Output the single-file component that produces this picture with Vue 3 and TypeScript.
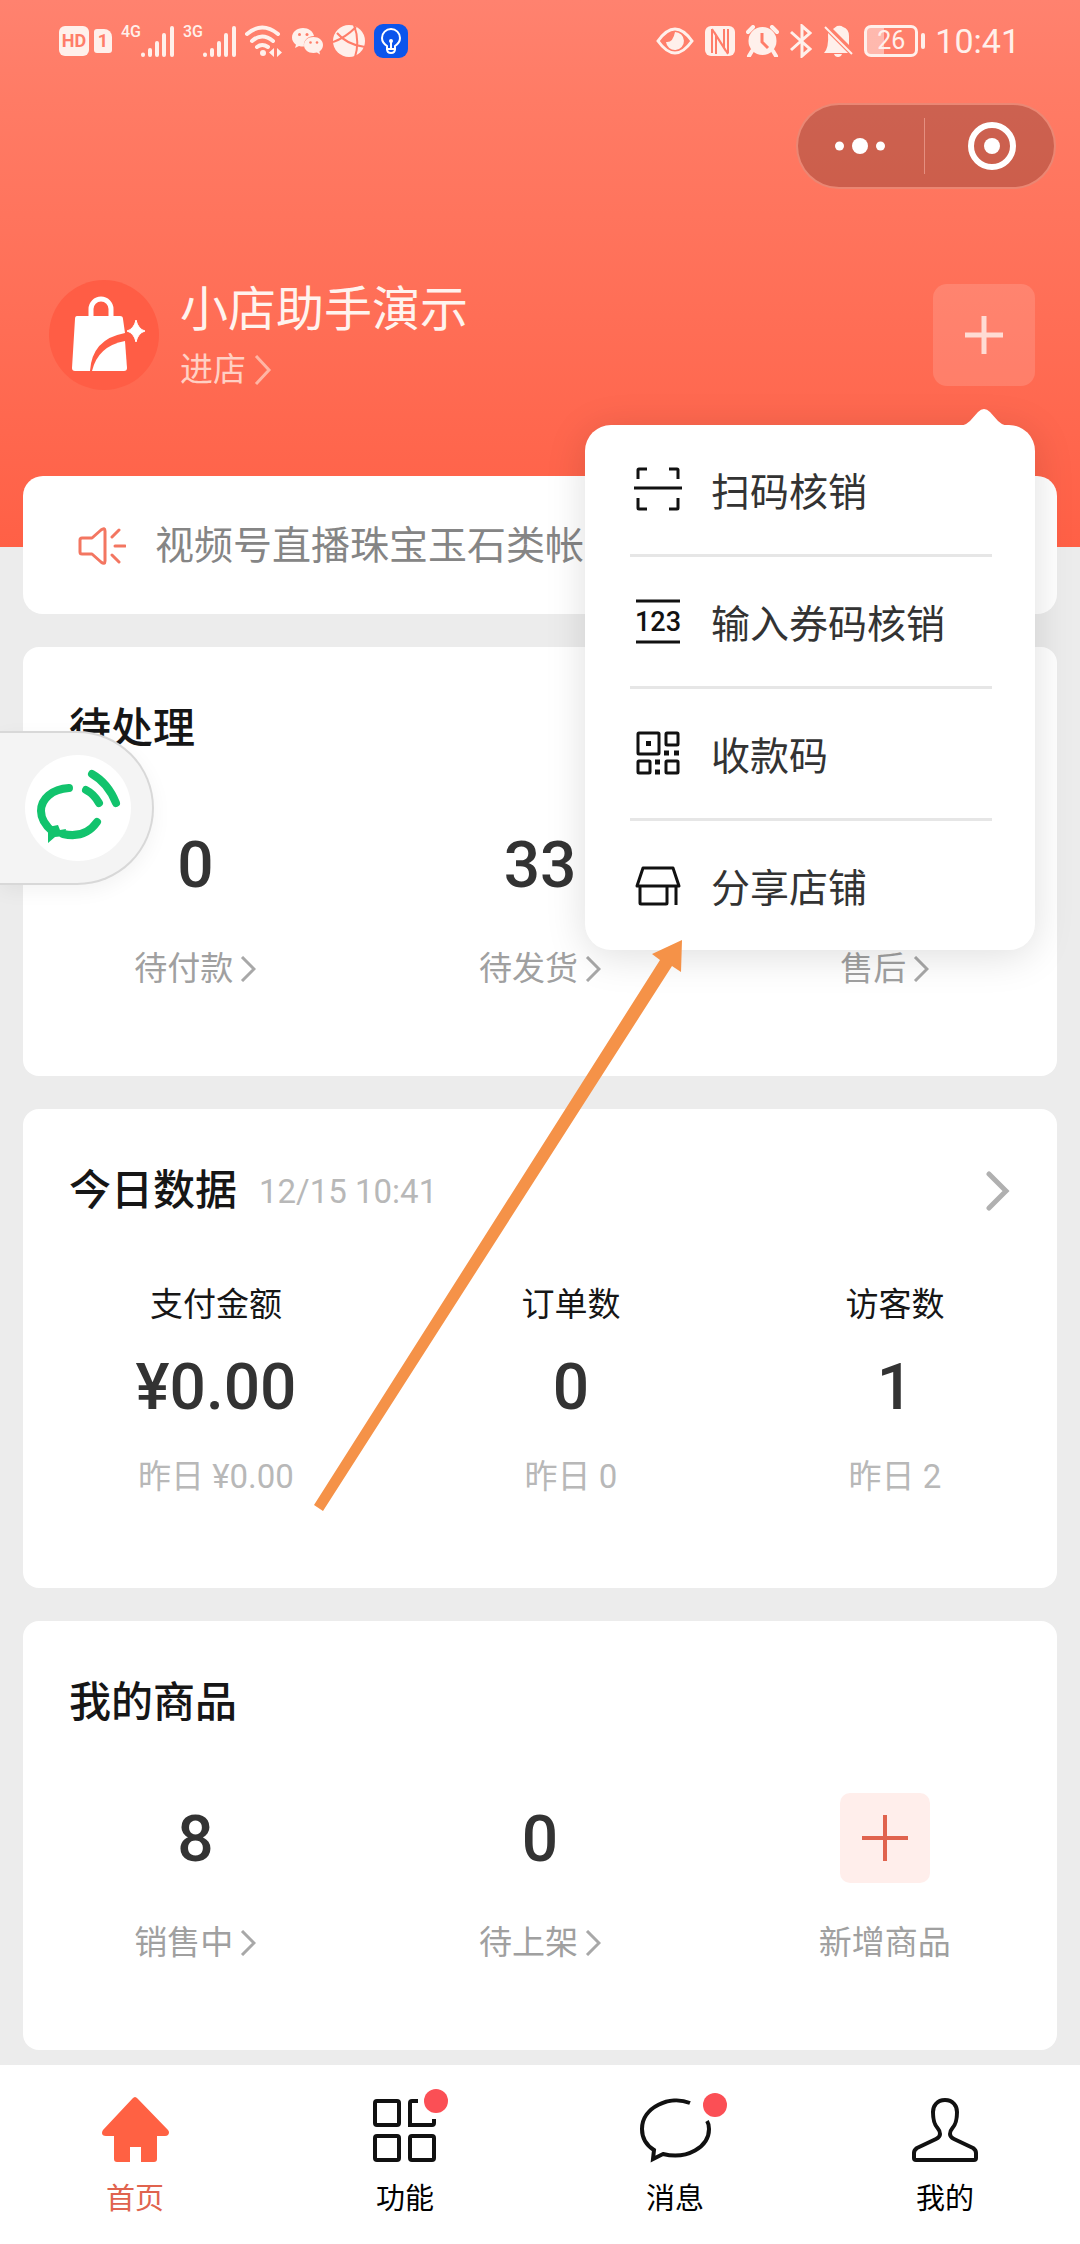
<script setup lang="ts">
import { ref } from 'vue'

interface Stat {
  label: string
  value: string
}

interface DayStat extends Stat {
  yesterday: string
}

type MenuIcon = 'scan' | 'digits' | 'qr' | 'shop'
type TabIcon = 'home' | 'grid' | 'chat' | 'me'

const menuOpen = ref(true)
const activeTab = ref<TabIcon>('home')

const menu: { icon: MenuIcon; label: string }[] = [
  { icon: 'scan', label: '扫码核销' },
  { icon: 'digits', label: '输入券码核销' },
  { icon: 'qr', label: '收款码' },
  { icon: 'shop', label: '分享店铺' },
]

const pending: Stat[] = [
  { label: '待付款', value: '0' },
  { label: '待发货', value: '33' },
  { label: '售后', value: '0' },
]

const today: DayStat[] = [
  { label: '支付金额', value: '¥0.00', yesterday: '昨日 ¥0.00' },
  { label: '订单数', value: '0', yesterday: '昨日 0' },
  { label: '访客数', value: '1', yesterday: '昨日 2' },
]

const goods: Stat[] = [
  { label: '销售中', value: '8' },
  { label: '待上架', value: '0' },
]

const tabs: { icon: TabIcon; label: string }[] = [
  { icon: 'home', label: '首页' },
  { icon: 'grid', label: '功能' },
  { icon: 'chat', label: '消息' },
  { icon: 'me', label: '我的' },
]
</script>

<template>
  <div class="page">
    <div class="status">
      <div class="status-group">
        <div class="badges">
          <span class="hd">HD</span>
          <span class="sim">1</span>
        </div>
        <div v-for="net in ['4G', '3G']" :key="net" class="signal">
          <span>{{ net }}</span>
          <svg width="33" height="32" viewBox="0 0 33 32" stroke="currentColor" stroke-width="4" stroke-linecap="round">
            <path d="M2 29.500v.5M9 25v5M16 18v12M23 10v20M31 3v27" />
          </svg>
        </div>
        <svg width="38" height="34" viewBox="0 0 38 34" fill="none" stroke="currentColor" stroke-width="4" stroke-linecap="round">
          <path d="M2 10Q17 -3 33 10M7 17Q17 8 28 17M12 23Q17 19 23 23" />
          <circle cx="18" cy="29" r="3" fill="currentColor" stroke="none" />
          <path d="M29 24v9l-5-4.500zM32 24v9l5-4.500z" fill="currentColor" stroke="none" />
        </svg>
        <svg width="32" height="30" viewBox="0 0 32 30" fill="currentColor">
          <path d="M11 2C5 2 0 6 0 11.500c0 3 1.600 5.500 4 7.200L3 22l4-2c1.300.4 2.700.5 4 .5h1c-1-6 4-10.500 10-10.500C21 5 16.500 2 11 2z" />
          <path d="M21.500 11C16 11 12 14.500 12 19s4 8 9.500 8c1.200 0 2.400-.2 3.500-.5l3 2-.6-3c2.200-1.500 3.600-3.800 3.600-6.500 0-4.500-4-8-9.500-8z" />
          <g fill="#ff7d69"><circle cx="7.500" cy="8.500" r="1.500" /><circle cx="15" cy="8.500" r="1.500" /><circle cx="18.500" cy="16.500" r="1.300" /><circle cx="25" cy="16.500" r="1.300" /></g>
        </svg>
        <svg width="32" height="32" viewBox="0 0 32 32">
          <circle cx="16" cy="16" r="16" fill="currentColor" />
          <path d="M0 17Q12 13 23 2M4 8Q14 20 32 22M21 0Q27 16 22 32" fill="none" stroke="#ff7d69" stroke-width="2" />
        </svg>
        <svg width="34" height="34" viewBox="0 0 34 34" fill="none" stroke="#fff" stroke-width="2">
          <rect width="34" height="34" rx="9" fill="#0b55ec" stroke="none" />
          <path d="M13 25v-3c-3-2-5-4-5-8a9 9 0 0 1 18 0c0 4-2 6-5 8v3zM17 24v-7M13 25q0 4 4 4t4-4" />
          <circle cx="17" cy="17" r="2" fill="#fff" stroke="none" />
        </svg>
      </div>
      <div class="status-group right">
        <svg width="38" height="28" viewBox="0 0 38 28" fill="none" stroke="currentColor" stroke-width="3">
          <path d="M2 14Q19-10 36 14Q19 38 2 14z" />
          <path d="M19 5a9 9 0 1 1-9 10q7 1 9-10z" fill="currentColor" stroke="none" />
        </svg>
        <svg width="30" height="30" viewBox="0 0 30 30">
          <rect width="30" height="30" rx="6" fill="currentColor" />
          <path d="M7 27V3M11 28V9l12 19M7 3l12 19V3M23 27V3" fill="none" stroke="#ff7d69" stroke-width="2" />
        </svg>
        <svg width="33" height="32" viewBox="0 0 33 32">
          <circle cx="16.500" cy="16" r="14" fill="currentColor" />
          <path d="M2 7l5-5M26 2l5 5M6 26l-3 5M27 26l3 5" stroke="currentColor" stroke-width="4" stroke-linecap="round" />
          <path d="M16 8v9l6 6" fill="none" stroke="#ff7d69" stroke-width="3" />
        </svg>
        <svg width="22" height="34" viewBox="0 0 22 34" fill="none" stroke="currentColor" stroke-width="3">
          <path d="M1 8l19 17-8 7V2l8 7L1 26" />
        </svg>
        <svg width="30" height="34" viewBox="0 0 30 34" fill="currentColor">
          <path d="M10 5l4-3q4-1 6 1 6 2 6 9v9zM5 9l20 20H1q5-5 4-20zM11 30h8q-1 3-4 3t-4-3z" />
          <path d="M2 3l27 27" stroke="currentColor" stroke-width="2" />
        </svg>
        <span class="battery">26</span>
        <span class="time">10:41</span>
      </div>
    </div>

    <div class="capsule-row">
      <div class="capsule">
        <button type="button" aria-label="更多">
          <svg width="50" height="18" viewBox="0 0 50 18" fill="#fff">
            <circle cx="4.500" cy="9" r="4.500" /><circle cx="25" cy="9" r="8" /><circle cx="45.500" cy="9" r="4.500" />
          </svg>
        </button>
        <button type="button" aria-label="关闭">
          <svg width="48" height="48" viewBox="0 0 48 48">
            <circle cx="24" cy="24" r="21" fill="none" stroke="#fff" stroke-width="6" /><circle cx="24" cy="24" r="8" fill="#fff" />
          </svg>
        </button>
      </div>
    </div>

    <header class="profile">
      <svg class="avatar" width="112" height="112" viewBox="0 0 112 112">
        <circle cx="56" cy="56" r="55" fill="#ff5d45" />
        <path d="M43 39v-9a9 9 0 0 1 20 0v9" fill="none" stroke="#fff" stroke-width="5" />
        <path d="M29 37h43q3 0 3 3l2 14Q44 60 42 92H27q-3 0-3-3l3-49q0-3 2-3z" fill="#fff" />
        <path d="M44 92Q50 67 77 62l2 27q0 3-3 3z" fill="#fff" />
        <path d="M88 41q2 9 9 11-7 2-9 11-2-9-9-11 7-2 9-11z" fill="#fff" stroke="#fff" />
      </svg>
      <div class="store">
        <h1>小店助手演示</h1>
        <a href="#store">进店<svg width="18" height="30" viewBox="0 0 18 30"><path d="M2 1l13 14L2 29" /></svg></a>
      </div>
      <div class="add-wrap">
        <button type="button" class="add" aria-label="添加" :aria-expanded="menuOpen" @click="menuOpen = !menuOpen">
          <svg width="38" height="38" viewBox="0 0 38 38"><path d="M19 0v38M0 19h38" /></svg>
        </button>
        <div v-if="menuOpen" class="menu">
          <svg class="beak" width="46" height="17" viewBox="0 0 46 17"><path d="M0 17q5-1 9-5l8-9q6-6 12 0l8 9q4 4 9 5z" fill="#fff" /></svg>
          <button v-for="item in menu" :key="item.icon" type="button" class="menu-item">
            <svg class="menu-icon" width="48" height="48" viewBox="0 0 48 48" fill="none" stroke="#111" stroke-width="3">
              <path v-if="item.icon === 'scan'" d="M4 14V5q0-1 1-1h8M35 4h8q1 0 1 1v9M4 33v10q0 1 1 1h8M35 44h8q1 0 1-1V33M0 23h48" />
              <template v-else-if="item.icon === 'digits'">
                <path d="M2 4h44M2 45h44" />
                <text x="24" y="34" text-anchor="middle" class="digits">123</text>
              </template>
              <template v-else-if="item.icon === 'qr'">
                <rect x="4" y="4" width="21" height="21" rx="1" /><rect x="32" y="4" width="12" height="12" rx="1" />
                <rect x="4" y="32" width="12" height="12" rx="1" /><rect x="32" y="32" width="12" height="12" rx="1" />
                <path d="M12 14.500h5M30 24h5M40 24h5M21 33h5M21 43h5" stroke-width="5" />
              </template>
              <path v-else stroke-linejoin="round" d="M9 7h30l6 18H3zM6 26v16q0 1 1 1h25q1 0 1-1V26M42 26v18" />
            </svg>
            <span>{{ item.label }}</span>
          </button>
        </div>
      </div>
    </header>

    <main class="cards">
      <section class="notice">
        <svg width="48" height="38" viewBox="0 0 48 38" fill="none" stroke="#f37661" stroke-width="3" stroke-linecap="round" stroke-linejoin="round">
          <path d="M4 11h10l9-8q4-3 4 1v30q0 4-4 1l-9-8H4q-2 0-2-2V13q0-2 2-2zM34 10l7-7M37 19h10M34 28l7 7" />
        </svg>
        <p>视频号直播珠宝玉石类帐</p>
      </section>

      <section class="card">
        <h2>待处理</h2>
        <ul class="thirds">
          <li v-for="s in pending" :key="s.label">
            <strong>{{ s.value }}</strong>
            <a href="#orders">{{ s.label }}<svg width="16" height="26" viewBox="0 0 16 26"><path d="M2 1l12 12L2 25" /></svg></a>
          </li>
        </ul>
      </section>

      <section class="card today">
        <div class="head">
          <h2>今日数据</h2>
          <time>12/15 10:41</time>
          <a href="#data" aria-label="查看数据"><svg width="24" height="40" viewBox="0 0 24 40"><path d="M3 3l17 17L3 37" /></svg></a>
        </div>
        <ul class="spread">
          <li v-for="s in today" :key="s.label">
            <span>{{ s.label }}</span>
            <strong>{{ s.value }}</strong>
            <small>{{ s.yesterday }}</small>
          </li>
        </ul>
      </section>

      <section class="card">
        <h2>我的商品</h2>
        <ul class="thirds">
          <li v-for="s in goods" :key="s.label">
            <strong>{{ s.value }}</strong>
            <a href="#goods">{{ s.label }}<svg width="16" height="26" viewBox="0 0 16 26"><path d="M2 1l12 12L2 25" /></svg></a>
          </li>
          <li>
            <button type="button" class="new-goods" aria-label="新增商品">
              <svg width="46" height="46" viewBox="0 0 46 46"><path d="M23 0v46M0 23h46" /></svg>
            </button>
            <a href="#new">新增商品</a>
          </li>
        </ul>
      </section>
    </main>

    <nav class="tabs">
      <button v-for="t in tabs" :key="t.icon" type="button" :class="{ active: activeTab === t.icon }" @click="activeTab = t.icon">
        <svg width="96" height="72" viewBox="0 0 96 72" fill="none" stroke="#111" stroke-width="4">
          <path v-if="t.icon === 'home'" fill="#ff6143" stroke="none" d="M45.500 4.500q2.500-3 5 0L81 36q2 2.500 0 5-1 1-3 1h-8v23q0 3-3 3H54V53H43v15H30q-3 0-3-3V42h-8q-4 0-4-3 0-1.500 1-3z" />
          <template v-else-if="t.icon === 'grid'">
            <rect x="18" y="7" width="24" height="24" rx="2" /><rect x="18" y="42" width="24" height="24" rx="2" /><rect x="53" y="42" width="24" height="24" rx="2" />
            <path d="M61 7h-6q-2 0-2 2v22h22q2 0 2-2v-4" />
            <circle cx="79" cy="7" r="12" class="dot" />
          </template>
          <template v-else-if="t.icon === 'chat'">
            <path d="M63 9C43 1 15 13 15 35c0 8 4 16 12 21l-1 9 10-5c24 6 46-7 46-25q0-5-2-8" />
            <circle cx="88" cy="11" r="12" class="dot" />
          </template>
          <path v-else stroke-linejoin="round" d="M48 6c-8 0-12 6-12 12 0 18 7 14 7 22q0 3-4 5L20 54q-3 2-3 5v5q0 2 2 2h58q2 0 2-2v-5q0-3-3-5L57 45q-4-2-4-5c0-8 7-4 7-22 0-6-4-12-12-12z" />
        </svg>
        <span>{{ t.label }}</span>
      </button>
    </nav>

    <button type="button" class="floating" aria-label="直播消息">
      <svg width="108" height="108" viewBox="0 0 108 108" fill="none" stroke="#12c36d" stroke-width="8" stroke-linecap="round">
        <circle cx="54" cy="54" r="53" fill="#fff" stroke="none" />
        <path d="M45 34C28 35 17 45 17 57q0 11 12 21M39 80q22 5 34-12M62 36q8 4 13 13M68 20q16 9 24 29" />
        <path d="M24 73l10-2 2 5 6-1-2 7-9 1-7 6z" fill="#12c36d" stroke="none" />
      </svg>
    </button>

    <svg class="pointer" width="370" height="574" viewBox="0 0 370 574">
      <path d="M368 1l-1 32-9-6L9 572l-9-6L346 21l-8-6z" fill="#f59248" />
    </svg>
  </div>
</template>

<style>
body {
  margin: 0;
}
</style>

<style scoped>
* {
  box-sizing: border-box;
}

.page {
  position: relative;
  display: flex;
  flex-direction: column;
  min-height: 100vh;
  overflow: hidden;
  color: #161616;
  background: #ececec linear-gradient(#ff826f 0, #ff7b65 100px, #ff6046 100%) no-repeat top / 100% 547px;
  font-family: Roboto, "Noto Sans CJK SC", sans-serif;
}

h1, h2, p, ul {
  margin: 0;
  padding: 0;
  list-style: none;
}

button {
  padding: 0;
  border: 0;
  color: inherit;
  background: none;
  font: inherit;
}

a {
  color: inherit;
  text-decoration: none;
}

svg {
  flex: none;
}

.status {
  display: flex;
  justify-content: space-between;
  height: 82px;
  padding: 0 60px 0 59px;
  color: #fff0eb;
}

.status-group {
  display: flex;
  align-items: center;
  gap: 9px;
}

.status-group.right {
  gap: 11px;
}

.badges {
  display: flex;
  align-items: center;
  gap: 5px;
}

.hd, .sim {
  border-radius: 6px;
  color: #ff7d69;
  background: #fff0eb;
  font-size: 18px;
  font-weight: 700;
  line-height: 30px;
  text-align: center;
}

.hd {
  width: 30px;
}

.sim {
  width: 18px;
  border-radius: 3px 8px 3px 3px;
  line-height: 24px;
}

.signal {
  display: flex;
  justify-content: flex-end;
  width: 53px;
}

.signal span {
  font-size: 16px;
  font-weight: 500;
  line-height: 14px;
}

.battery {
  position: relative;
  width: 54px;
  margin-right: 6px;
  border: 3px solid;
  border-radius: 7px;
  background: linear-gradient(90deg, rgba(255, 255, 255, 0.45) 35%, transparent 35%);
  font-size: 25px;
  line-height: 26px;
  text-align: center;
}

.battery::after {
  content: "";
  position: absolute;
  top: 5px;
  right: -10px;
  width: 4px;
  height: 16px;
  border-radius: 2px;
  background: currentColor;
}

.time {
  font-size: 34px;
}

.capsule-row {
  display: flex;
  justify-content: flex-end;
  padding: 21px 24px 0;
}

.capsule {
  display: flex;
  width: 260px;
  height: 86px;
  border: 2px solid rgba(255, 160, 140, 0.6);
  border-radius: 43px;
  background: rgba(0, 0, 0, 0.2);
}

.capsule button {
  display: flex;
  flex: 1;
  align-items: center;
  justify-content: center;
  padding-right: 2px;
}

.capsule button + button {
  position: relative;
  padding: 0 0 0 6px;
}

.capsule button + button::before {
  content: "";
  position: absolute;
  top: 13px;
  bottom: 13px;
  left: 0;
  width: 1px;
  background: #e58f80;
}

.profile {
  display: flex;
  align-items: center;
  padding: 87px 45px 82px 48px;
}

.store {
  display: flex;
  flex: 1;
  flex-direction: column;
  gap: 4px;
  margin-left: 20px;
  padding-top: 2px;
}

.store h1 {
  color: #fff3ee;
  font-size: 48px;
  font-weight: 400;
  line-height: 64px;
}

.store a {
  display: flex;
  align-items: center;
  gap: 8px;
  color: #ffd0c4;
  font-size: 33px;
  line-height: 48px;
}

.store path {
  fill: none;
  stroke: #ffb5a4;
  stroke-width: 3;
}

.add-wrap {
  position: relative;
}

.add {
  display: flex;
  align-items: center;
  justify-content: center;
  width: 102px;
  height: 102px;
  border-radius: 14px;
  background: rgba(255, 255, 255, 0.14);
}

.add path {
  stroke: #ffdcd4;
  stroke-width: 5;
}

.menu {
  position: absolute;
  z-index: 2;
  top: calc(100% + 39px);
  right: 0;
  width: 450px;
  padding: 0 43px 0 45px;
  border-radius: 26px;
  background: #fff;
  box-shadow: 0 6px 40px rgba(0, 0, 0, 0.13);
}

.beak {
  position: absolute;
  top: -16px;
  right: 28px;
}

.menu-item {
  display: flex;
  align-items: center;
  gap: 29px;
  width: 100%;
  height: 132px;
  padding: 0 0 2px 4px;
  border-bottom: 3px solid #e6e6e6;
  color: #333;
  font-size: 39px;
}

.menu-item:last-child {
  height: 129px;
  border-bottom: 0;
}

.digits {
  fill: #111;
  stroke: none;
  font-size: 27px;
  font-weight: 500;
}

.cards {
  display: flex;
  flex: 1;
  flex-direction: column;
  gap: 33px;
  padding: 0 23px 15px;
}

.notice {
  display: flex;
  align-items: center;
  gap: 29px;
  padding: 40px 55px 38px;
  border-radius: 20px;
  background: #fff;
}

.notice p {
  color: #858585;
  font-size: 39px;
  line-height: 60px;
  white-space: nowrap;
}

.card {
  padding: 52px 0 83px;
  border-radius: 16px;
  background: #fff;
}

.card.today {
  padding-bottom: 87px;
}

.card h2 {
  margin-left: 46px;
  font-size: 42px;
  font-weight: 500;
  line-height: 60px;
}

.head {
  display: flex;
  align-items: center;
  padding-right: 47px;
}

.head time {
  flex: 1;
  margin-left: 22px;
  color: #b8b8b8;
  font-size: 33px;
}

.head a {
  display: flex;
}

.head path {
  fill: none;
  stroke: #b0b0b0;
  stroke-width: 5;
  stroke-linecap: round;
}

.thirds, .spread {
  display: flex;
  margin-top: 60px;
}

.spread {
  justify-content: space-around;
}

li {
  display: flex;
  flex-direction: column;
  align-items: center;
}

.thirds li {
  flex: 1;
  gap: 32px;
}

strong {
  color: #333;
  font-size: 64px;
  font-weight: 500;
  line-height: 94px;
}

li a {
  display: flex;
  align-items: center;
  gap: 7px;
  color: #a0a0a0;
  font-size: 33px;
  line-height: 48px;
}

li a path {
  fill: none;
  stroke: #a8a8a8;
  stroke-width: 3;
}

li span {
  margin-bottom: 12px;
  font-size: 33px;
  line-height: 48px;
}

li small {
  margin-top: 18px;
  color: #b8b8b8;
  font-size: 33px;
  line-height: 48px;
}

.new-goods {
  display: flex;
  align-items: center;
  justify-content: center;
  width: 90px;
  height: 90px;
  margin-bottom: 4px;
  border-radius: 10px;
  background: #ffeeeb;
}

.new-goods path {
  stroke: #e0634e;
  stroke-width: 4;
}

.tabs {
  display: flex;
  padding: 29px 0 25px;
  background: #fff;
}

.tabs button {
  display: flex;
  flex: 1;
  flex-direction: column;
  align-items: center;
  gap: 13px;
  color: #000;
  font-size: 29px;
  line-height: 40px;
}

.tabs .active {
  color: #e0634e;
}

.tabs svg {
  overflow: visible;
}

.dot {
  fill: #fb4f55;
  stroke: none;
}

.floating {
  position: absolute;
  top: 731px;
  left: 0;
  display: flex;
  align-items: center;
  width: 154px;
  height: 154px;
  padding-left: 24px;
  border: 2px solid #d8d8d8;
  border-left: 0;
  border-radius: 0 77px 77px 0;
  background: #f4f4f4;
  box-shadow: 0 6px 20px rgba(0, 0, 0, 0.05);
}

.pointer {
  position: absolute;
  z-index: 3;
  top: 939px;
  left: 314px;
  pointer-events: none;
}
</style>
